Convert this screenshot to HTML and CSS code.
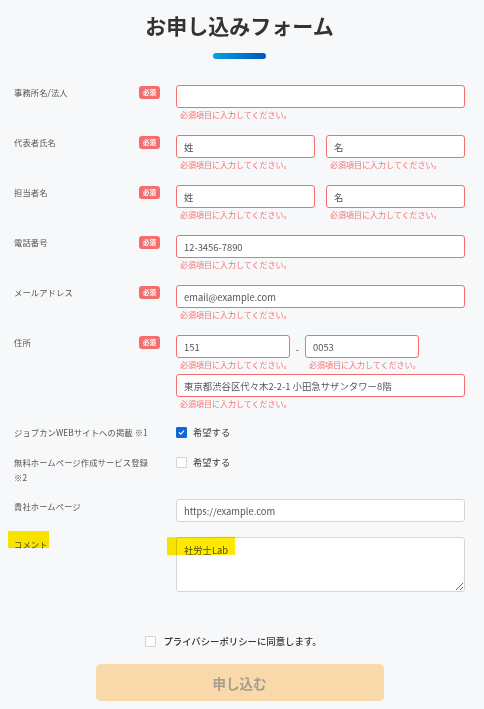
FILE: index.html
```html
<!DOCTYPE html>
<html lang="ja">
<head>
<meta charset="utf-8">
<title>お申し込みフォーム</title>
<link rel="stylesheet" href="styles.css">
</head>
<body>
<div class="page">
  <h1 class="title">お申し込みフォーム</h1>
  <div class="title-bar"></div>

  <form class="form">
    <div class="row">
      <div class="label"><span class="label-text">事務所名/法人</span><span class="badge">必須</span></div>
      <div class="field">
        <input class="input is-error" type="text" value="">
        <p class="error">必須項目に入力してください。</p>
      </div>
    </div>

    <div class="row">
      <div class="label"><span class="label-text">代表者氏名</span><span class="badge">必須</span></div>
      <div class="field pair">
        <div class="pair-item">
          <input class="input is-error" type="text" value="姓">
          <p class="error">必須項目に入力してください。</p>
        </div>
        <div class="pair-item">
          <input class="input is-error" type="text" value="名">
          <p class="error">必須項目に入力してください。</p>
        </div>
      </div>
    </div>

    <div class="row">
      <div class="label"><span class="label-text">担当者名</span><span class="badge">必須</span></div>
      <div class="field pair">
        <div class="pair-item">
          <input class="input is-error" type="text" value="姓">
          <p class="error">必須項目に入力してください。</p>
        </div>
        <div class="pair-item">
          <input class="input is-error" type="text" value="名">
          <p class="error">必須項目に入力してください。</p>
        </div>
      </div>
    </div>

    <div class="row">
      <div class="label"><span class="label-text">電話番号</span><span class="badge">必須</span></div>
      <div class="field">
        <input class="input is-error" type="text" value="12-3456-7890">
        <p class="error">必須項目に入力してください。</p>
      </div>
    </div>

    <div class="row">
      <div class="label"><span class="label-text">メールアドレス</span><span class="badge">必須</span></div>
      <div class="field">
        <input class="input is-error" type="text" value="email@example.com">
        <p class="error">必須項目に入力してください。</p>
      </div>
    </div>

    <div class="row">
      <div class="label"><span class="label-text">住所</span><span class="badge">必須</span></div>
      <div class="field">
        <div class="postal">
          <div class="postal-item">
            <input class="input is-error" type="text" value="151">
            <p class="error">必須項目に入力してください。</p>
          </div>
          <span class="postal-dash">-</span>
          <div class="postal-item">
            <input class="input is-error" type="text" value="0053">
            <p class="error">必須項目に入力してください。</p>
          </div>
        </div>
        <input class="input is-error address" type="text" value="東京都渋谷区代々木2-2-1 小田急サザンタワー8階">
        <p class="error">必須項目に入力してください。</p>
      </div>
    </div>

    <div class="row row-check">
      <div class="label"><span class="label-text">ジョブカンWEBサイトへの掲載 ※1</span></div>
      <div class="field">
        <label class="check">
          <span class="box is-checked">
            <svg viewBox="0 0 11 11" width="11" height="11"><path d="M3.2 5.6 L4.8 7.1 L7.8 3.9" fill="none" stroke="#fff" stroke-width="1.1" stroke-linecap="round" stroke-linejoin="round"/></svg>
          </span>
          <span class="check-text">希望する</span>
        </label>
      </div>
    </div>

    <div class="row row-check">
      <div class="label"><span class="label-text">無料ホームページ作成サービス登録 ※2</span></div>
      <div class="field">
        <label class="check">
          <span class="box"></span>
          <span class="check-text">希望する</span>
        </label>
      </div>
    </div>

    <div class="row">
      <div class="label"><span class="label-text">貴社ホームページ</span></div>
      <div class="field">
        <input class="input" type="text" value="https://example.com">
      </div>
    </div>

    <div class="row row-comment">
      <div class="label"><span class="label-text marked">コメント<span class="marker marker-label"></span></span></div>
      <div class="field marked">
        <textarea class="textarea">社労士Lab</textarea>
        <span class="marker marker-text"></span>
      </div>
    </div>
  </form>

  <div class="privacy">
    <span class="box"></span>
    <span class="privacy-text">プライバシーポリシーに同意します。</span>
  </div>

  <div class="submit-wrap">
    <button class="submit" type="button">申し込む</button>
  </div>
</div>
</body>
</html>
```

FILE: styles.css
```css
* {
  box-sizing: border-box;
}

html, body {
  margin: 0;
  padding: 0;
  background: #f7f8fa;
}

body {
  font-family: "Noto Sans CJK JP", "Noto Sans", sans-serif;
  color: #333;
}

.page {
  width: 478px;
  padding: 11px 13px 0 14px;
}

.title {
  margin: 0;
  font-size: 21px;
  line-height: 28px;
  font-weight: 700;
  color: #333;
  text-align: center;
}

.title-bar {
  width: 53px;
  height: 6px;
  margin: 14px auto 0;
  border-radius: 3px;
  background: linear-gradient(90deg, #06a0e6 0%, #0056b8 100%);
}

.form {
  margin-top: 26px;
  display: flex;
  flex-direction: column;
  gap: 14px;
}

.row {
  display: grid;
  grid-template-columns: 146px 1fr;
  column-gap: 16px;
}

.row-check {
  margin-top: 1px;
}

.row-comment {
  margin-top: 1px;
}

.label {
  display: flex;
  justify-content: space-between;
  align-items: flex-start;
}

.label-text {
  font-size: 8.3px;
  line-height: 15px;
  color: #555;
  letter-spacing: 0.1px;
}

.badge {
  flex: none;
  width: 21px;
  height: 12.5px;
  margin-top: 1px;
  border-radius: 3px;
  background: #f46e6e;
  color: #fff;
  font-size: 6.5px;
  font-weight: 700;
  line-height: 12.5px;
  text-align: center;
}

.field {
  min-width: 0;
}

.input {
  display: block;
  width: 100%;
  height: 23px;
  margin: 0;
  padding: 0 7px;
  border: 1px solid #d6d6d6;
  border-radius: 3px;
  background: #fff;
  font-family: "Noto Sans CJK JP", "Noto Sans", sans-serif;
  font-size: 9.4px;
  color: #555;
  outline: none;
}

.input.is-error {
  border-color: #f46e6e;
}

.error {
  margin: 1px 0 0;
  padding-left: 4px;
  font-size: 8px;
  line-height: 12px;
  color: #f47575;
  white-space: nowrap;
}

.pair {
  display: flex;
  gap: 11px;
}

.pair-item {
  flex: 1 1 0;
  min-width: 0;
}

.postal {
  display: flex;
  align-items: flex-start;
}

.postal-item {
  width: 114px;
}

.postal-dash {
  width: 15px;
  text-align: center;
  font-size: 9.4px;
  line-height: 23px;
  padding-top: 3px;
  color: #555;
}

.address {
  margin-top: 3px;
}

.check {
  display: flex;
  align-items: center;
  gap: 6px;
  height: 15px;
}

.box {
  flex: none;
  display: block;
  width: 11px;
  height: 11px;
  border: 1px solid #d3d3d3;
  border-radius: 1px;
  background: #fff;
}

.box.is-checked {
  border-color: #1366d6;
  background: #1366d6;
}

.box.is-checked svg {
  display: block;
  margin: -1px;
}

.check-text {
  font-size: 9.3px;
  line-height: 15px;
  color: #333;
}

.textarea {
  display: block;
  width: 100%;
  height: 55px;
  margin: 0;
  padding: 6px 7px;
  border: 1px solid #d6d6d6;
  border-radius: 3px;
  background: #fff;
  font-family: "Noto Sans CJK JP", "Noto Sans", sans-serif;
  font-size: 9.3px;
  line-height: 13px;
  color: #555;
  resize: vertical;
  outline: none;
}

.marked {
  position: relative;
}

.marker {
  position: absolute;
  background: #ffe900;
  mix-blend-mode: multiply;
  pointer-events: none;
}

.marker-label {
  left: -6px;
  top: -6px;
  width: 41px;
  height: 17px;
}

.marker-text {
  left: -9px;
  top: 0;
  width: 68px;
  height: 18px;
  transform: rotate(-0.6deg);
}

.privacy {
  margin-top: 42px;
  display: flex;
  justify-content: center;
  align-items: center;
  gap: 7px;
  height: 15px;
  padding-right: 12px;
}

.privacy-text {
  font-size: 9.4px;
  line-height: 15px;
  font-weight: 500;
  color: #333;
}

.submit-wrap {
  margin-top: 15px;
  display: flex;
  justify-content: center;
}

.submit {
  width: 288px;
  height: 37px;
  border: none;
  border-radius: 5px;
  background: #f9d9a9;
  font-family: "Noto Sans CJK JP", "Noto Sans", sans-serif;
  font-size: 13.5px;
  font-weight: 700;
  color: #a59d93;
  cursor: default;
}
```
